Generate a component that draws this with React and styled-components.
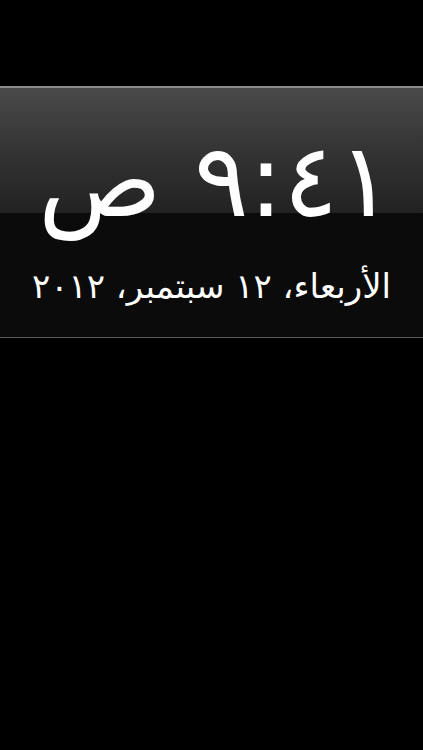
import React from "react";
import styled, { createGlobalStyle } from "styled-components";

const Global = createGlobalStyle`
	html, body {
		margin: 0;
		padding: 0;
		background: #000;
	}
	body {
		font-family: "DejaVu Sans", "Noto Sans", sans-serif;
	}
`;

function App() {
	return (
		<>
			<Global />
			<Screen>
				<Band>
					<Gloss />
					<Time dir="rtl">٩:٤١ ص</Time>
					<DateLine dir="rtl">الأربعاء، ١٢ سبتمبر، ٢٠١٢</DateLine>
				</Band>
			</Screen>
		</>
	);
}

export default App;

const Screen = styled.div`
	width: 423px;
	height: 750px;
	background: #000;
	padding-top: 86px;
	box-sizing: border-box;
	overflow: hidden;
`;

const Band = styled.div`
	position: relative;
	height: 252px;
	box-sizing: border-box;
	border-top: 2px solid #8c8c8c;
	border-bottom: 1px solid #5a5a5a;
	background: #0b0b0b;
	display: flex;
	flex-direction: column;
	align-items: center;
	color: #fff;
`;

const Gloss = styled.div`
	position: absolute;
	left: 0;
	right: 0;
	top: 0;
	height: 125px;
	background: linear-gradient(to bottom, #4a4a4a 0%, #363636 45%, #222 100%);
`;

const Time = styled.div`
	position: relative;
	margin-top: 33px;
	font-size: 102px;
	line-height: 120px;
	letter-spacing: 4px;
	padding-left: 8px;
	white-space: nowrap;
`;

const DateLine = styled.div`
	position: relative;
	margin-top: 25px;
	font-size: 34px;
	line-height: 40px;
	white-space: nowrap;
`;
